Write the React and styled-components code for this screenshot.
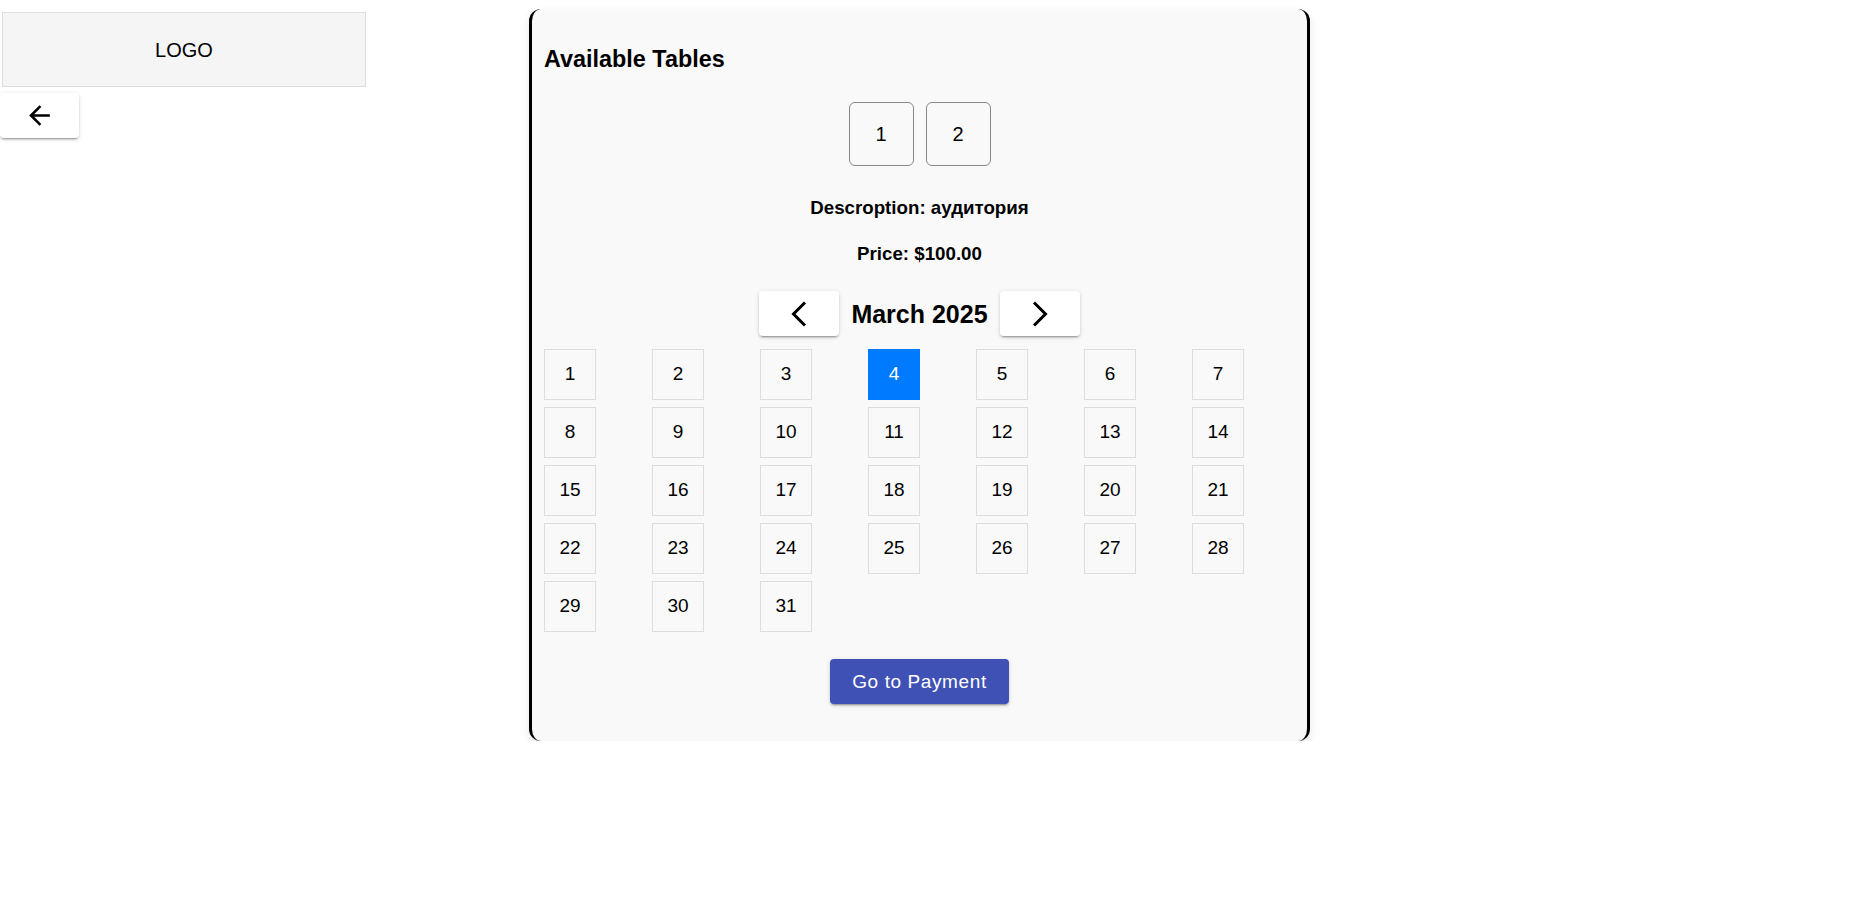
import React from 'react';
import styled, { createGlobalStyle } from 'styled-components';

const GlobalStyle = createGlobalStyle`
  body {
    margin: 0;
    background: #fff;
    color: #000;
    font-family: "Liberation Sans", Arial, sans-serif;
    line-height: 1.5;
  }
`;

const raised = `
  box-shadow: 0 3px 1px -2px rgba(0, 0, 0, 0.2), 0 2px 2px 0 rgba(0, 0, 0, 0.14),
    0 1px 5px 0 rgba(0, 0, 0, 0.12);
`;

const ArrowBackIcon = () => (
  <svg width="31" height="31" viewBox="0 0 24 24" fill="#000">
    <path d="M20 11H7.83l5.59-5.59L12 4l-8 8 8 8 1.41-1.41L7.83 13H20z" />
  </svg>
);

// thin chevrons, drawn as strokes
const Chevron = ({ dir }) => (
  <svg width="20" height="26" viewBox="0 0 20 26" fill="none">
    <polyline
      points={dir === 'left' ? '16,1.5 4.5,13 16,24.5' : '4,1.5 15.5,13 4,24.5'}
      stroke="#000"
      strokeWidth="3"
      strokeLinejoin="miter"
    />
  </svg>
);

const tables = [1, 2];
const days = Array.from({ length: 31 }, (_, i) => i + 1);

const App = () => {
  return (
    <>
      <GlobalStyle />
      <Page>
        <Sidebar>
          <Logo>LOGO</Logo>
          <BackButton aria-label="back">
            <ArrowBackIcon />
          </BackButton>
        </Sidebar>

        <Card>
          <Title>Available Tables</Title>
          <TableRow>
            {tables.map((t) => (
              <TableButton key={t}>{t}</TableButton>
            ))}
          </TableRow>
          <Info>Descroption: аудитория</Info>
          <Info>Price: $100.00</Info>

          <MonthNav>
            <NavButton aria-label="previous month">
              <Chevron dir="left" />
            </NavButton>
            <Month>March 2025</Month>
            <NavButton aria-label="next month">
              <Chevron dir="right" />
            </NavButton>
          </MonthNav>

          <DayGrid>
            {days.map((d) => (
              <Day key={d} $selected={d === 4}>
                {d}
              </Day>
            ))}
          </DayGrid>

          <Footer>
            <PayButton>Go to Payment</PayButton>
          </Footer>
        </Card>
      </Page>
    </>
  );
};

const Page = styled.div`
  display: grid;
  grid-template-columns: 529px 781px;
  align-items: start;
`;

const Sidebar = styled.div`
  display: flex;
  flex-direction: column;
  align-items: flex-start;
  padding-top: 12px;
`;

const Logo = styled.div`
  margin-left: 2px;
  width: 364px;
  height: 75px;
  box-sizing: border-box;
  border: 1px solid #ddd;
  background: #f5f5f5;
  display: flex;
  align-items: center;
  justify-content: center;
  font-size: 20px;
`;

const BackButton = styled.button`
  margin-top: 6px;
  width: 79px;
  height: 45px;
  padding: 0;
  border: none;
  border-radius: 4px;
  background: #fff;
  display: flex;
  align-items: center;
  justify-content: center;
  cursor: pointer;
  ${raised}
`;

const Card = styled.div`
  margin-top: 9px;
  box-sizing: border-box;
  width: 781px;
  padding: 12px;
  background: #f9f9f9;
  border-left: 3px solid #000;
  border-right: 3px solid #000;
  border-radius: 12px;
  box-shadow: 0 4px 10px rgba(0, 0, 0, 0.1);
`;

const Title = styled.h2`
  margin: 20px 0;
  font-size: 23.4px;
  line-height: 36px;
  font-weight: bold;
`;

const TableRow = styled.div`
  display: flex;
  justify-content: center;
  gap: 12px;
  margin: 25px 0 28px;
`;

const TableButton = styled.button`
  width: 65px;
  height: 64px;
  padding: 0;
  border: 1px solid #888;
  border-radius: 6px;
  background: transparent;
  color: #000;
  font-family: inherit;
  font-size: 20px;
  cursor: pointer;
`;

const Info = styled.h3`
  margin: 18px 0;
  font-size: 18.72px;
  line-height: 28px;
  font-weight: bold;
  text-align: center;
`;

const MonthNav = styled.div`
  display: flex;
  justify-content: center;
  align-items: center;
  gap: 12px;
  margin-top: 23px;
`;

const NavButton = styled.button`
  width: 80px;
  height: 45px;
  padding: 0;
  border: none;
  border-radius: 4px;
  background: #fff;
  display: flex;
  align-items: center;
  justify-content: center;
  cursor: pointer;
  ${raised}
`;

const Month = styled.h2`
  margin: 0;
  font-size: 25px;
  line-height: 36px;
  font-weight: bold;
`;

const DayGrid = styled.div`
  display: grid;
  grid-template-columns: repeat(7, 1fr);
  column-gap: 5px;
  row-gap: 7px;
  justify-items: start;
  margin-top: 13px;
`;

const Day = styled.div`
  width: 52px;
  height: 51px;
  box-sizing: border-box;
  border: 1px solid ${(p) => (p.$selected ? '#007bff' : '#ddd')};
  background: ${(p) => (p.$selected ? '#007bff' : 'transparent')};
  color: ${(p) => (p.$selected ? '#fff' : '#000')};
  display: flex;
  align-items: center;
  justify-content: center;
  font-size: 19px;
  cursor: pointer;
`;

const Footer = styled.div`
  display: flex;
  justify-content: center;
  margin: 27px 0 25px;
`;

const PayButton = styled.button`
  height: 45px;
  padding: 0 22px;
  border: none;
  border-radius: 4px;
  background: #3f51b5;
  color: #fff;
  font-family: inherit;
  font-size: 19px;
  letter-spacing: 0.6px;
  cursor: pointer;
  ${raised}
`;

export default App;
